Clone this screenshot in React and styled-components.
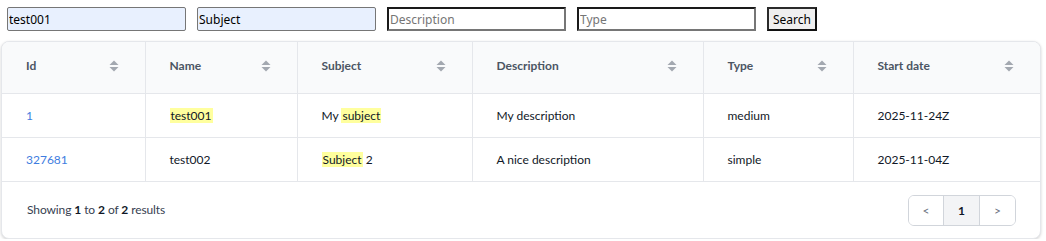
import React from "react"
import styled, { createGlobalStyle } from "styled-components"

const GlobalStyle = createGlobalStyle`
  body {
    margin: 0;
    background: #ffffff;
    font-family: Lato, "Noto Sans", sans-serif;
  }
`

const Page = styled.div`
  width: 1046px;
`

const SearchBar = styled.form`
  display: flex;
  align-items: center;
  gap: 11px;
  padding: 7px 0 0 7px;
  height: 24px;
`

const Field = styled.input`
  box-sizing: border-box;
  width: 179px;
  height: 24px;
  margin: 0;
  padding: 0 1px;
  font-family: "Noto Sans", sans-serif;
  font-size: 12px;
  color: #000000;
  outline: none;
  ${({ filled }) =>
    filled
      ? `
    background: #e8f0fe;
    border: 1px solid #767676;
    border-radius: 2px;
  `
      : `
    background: #ffffff;
    border: 2px solid;
    border-color: #1a1a1a #767676 #767676 #1a1a1a;
    border-radius: 0;
  `}
  &::placeholder {
    color: #757575;
  }
`

const Button = styled.button`
  box-sizing: border-box;
  width: 50px;
  height: 24px;
  margin: 0;
  padding: 0;
  background: #efefef;
  border: 2px solid;
  border-color: #2a2a2a #111111 #111111 #2a2a2a;
  font-family: "Noto Sans", sans-serif;
  font-size: 12px;
  color: #000000;
`

const Card = styled.div`
  box-sizing: border-box;
  width: 1040px;
  margin: 10px 0 0 1px;
  background: #ffffff;
  border: 1px solid #e5e7eb;
  border-radius: 8px;
  overflow: hidden;
  box-shadow: 0 1px 3px rgba(0, 0, 0, 0.18);
`

const Table = styled.table`
  width: 100%;
  table-layout: fixed;
  border-collapse: collapse;
`

const HeadCell = styled.th`
  height: 51px;
  padding: 0 26px 0 24px;
  background: #f9fafb;
  border-right: 1px solid #e5e7eb;
  border-bottom: 1px solid #e5e7eb;
  text-align: left;
  font-size: 12px;
  font-weight: 700;
  color: #4b5563;
  &:last-child {
    border-right: none;
  }
`

const HeadInner = styled.div`
  display: flex;
  align-items: center;
  justify-content: space-between;
  padding-bottom: 4px;
`

const Cell = styled.td`
  height: 43px;
  padding: 0 24px;
  border-right: 1px solid #e5e7eb;
  border-bottom: 1px solid #e5e7eb;
  font-size: 12px;
  color: ${({ link }) => (link ? "#3f7de0" : "#111827")};
  white-space: nowrap;
  &:last-child {
    border-right: none;
  }
`

const Mark = styled.mark`
  background: #ffff9e;
  color: inherit;
  padding: 0 1px;
`

const Footer = styled.div`
  display: flex;
  align-items: center;
  justify-content: space-between;
  height: 56px;
  padding: 0 24px 0 25px;
  font-size: 12px;
  letter-spacing: -0.1px;
  color: #374151;
  b {
    color: #111827;
  }
`

const Summary = styled.span`
  margin-bottom: 2px;
`

const Pager = styled.div`
  display: flex;
  border: 1px solid #d1d5db;
  border-radius: 6px;
  overflow: hidden;
  margin-top: 1px;
`

const PageButton = styled.div`
  display: flex;
  align-items: center;
  justify-content: center;
  width: 35px;
  height: 29px;
  font-size: 12px;
  font-weight: ${({ active }) => (active ? 700 : 400)};
  color: ${({ active }) => (active ? "#111827" : "#6b7280")};
  background: ${({ active }) => (active ? "#f3f4f6" : "#ffffff")};
  &:first-child {
    width: 34px;
  }
  & + & {
    border-left: 1px solid #d1d5db;
  }
`

const SortIcon = () => (
  <svg width="10" height="12" viewBox="0 0 10 12">
    <path d="M5 0.5 L9.5 5 L0.5 5 Z" fill="#a3a8b0" />
    <path d="M5 11.5 L9.5 7 L0.5 7 Z" fill="#a3a8b0" />
  </svg>
)

const columns = [
  { title: "Id", width: 143 },
  { title: "Name", width: 152 },
  { title: "Subject", width: 175 },
  { title: "Description", width: 231 },
  { title: "Type", width: 150 },
  { title: "Start date", width: 187 },
]

const rows = [
  {
    id: "1",
    name: <Mark>test001</Mark>,
    subject: (
      <>
        My <Mark>subject</Mark>
      </>
    ),
    description: "My description",
    type: "medium",
    date: "2025-11-24Z",
  },
  {
    id: "327681",
    name: "test002",
    subject: (
      <>
        <Mark>Subject</Mark> 2
      </>
    ),
    description: "A nice description",
    type: "simple",
    date: "2025-11-04Z",
  },
]

export default function App() {
  return (
    <Page>
      <GlobalStyle />
      <SearchBar>
        <Field filled defaultValue="test001" />
        <Field filled defaultValue="Subject" />
        <Field placeholder="Description" />
        <Field placeholder="Type" />
        <Button type="button">Search</Button>
      </SearchBar>
      <Card>
        <Table>
          <colgroup>
            {columns.map((c) => (
              <col key={c.title} style={{ width: c.width }} />
            ))}
          </colgroup>
          <thead>
            <tr>
              {columns.map((c) => (
                <HeadCell key={c.title}>
                  <HeadInner>
                    <span>{c.title}</span>
                    <SortIcon />
                  </HeadInner>
                </HeadCell>
              ))}
            </tr>
          </thead>
          <tbody>
            {rows.map((r) => (
              <tr key={r.id}>
                <Cell link>{r.id}</Cell>
                <Cell>{r.name}</Cell>
                <Cell>{r.subject}</Cell>
                <Cell>{r.description}</Cell>
                <Cell>{r.type}</Cell>
                <Cell>{r.date}</Cell>
              </tr>
            ))}
          </tbody>
        </Table>
        <Footer>
          <Summary>
            Showing <b>1</b> to <b>2</b> of <b>2</b> results
          </Summary>
          <Pager>
            <PageButton>&lt;</PageButton>
            <PageButton active>1</PageButton>
            <PageButton>&gt;</PageButton>
          </Pager>
        </Footer>
      </Card>
    </Page>
  )
}
